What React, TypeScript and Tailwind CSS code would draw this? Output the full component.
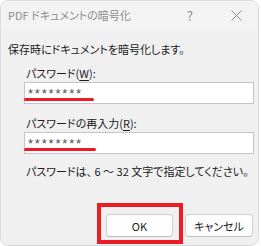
import React from 'react';

const font = "font-['Yu_Gothic_UI','Noto_Sans_CJK_JP',sans-serif] [font-feature-settings:'palt']";

function PasswordField({ label, accel, redWidth }: { label: string; accel: string; redWidth: number }) {
  return (
    <div>
      <p className="h-4 pl-[2px] leading-4">
        {label}(<span className="underline underline-offset-2">{accel}</span>):
      </p>
      <div className="relative mt-px h-[22px] w-[230px] border border-[#c4c4cc] bg-white pl-[3px] font-['Liberation_Sans',sans-serif] text-[13px] leading-[22px] tracking-[1.8px] text-[#505050]">
        ********
        <span className="absolute -left-px bottom-[2px] h-[3px] rounded-full bg-[#ed1c24]" style={{ width: redWidth }} />
      </div>
    </div>
  );
}

export default function App() {
  return (
    <div className={`h-[246px] w-[261px] bg-white text-[11px] text-[#1b1b1b] ${font}`}>
      <div className="relative flex h-[246px] w-[259px] flex-col overflow-hidden rounded-[8px] border border-[#dcdcdc] bg-[#f0f0f0]">
        <div className="flex h-[29px] items-center bg-[#f3f3f3] pl-[7px] text-[#8c8c8c]">
          <span className="flex-1">PDF ドキュメントの暗号化</span>
          <span className="mr-[38px] text-[13px]">?</span>
          <svg width="11" height="11" viewBox="0 0 11 11" className="mr-4" stroke="#8c8c8c" strokeWidth="1">
            <path d="M0.5 0.5 L10.5 10.5 M10.5 0.5 L0.5 10.5" />
          </svg>
        </div>

        <div className="flex flex-col pl-[7px]">
          <p className="mt-[11px] h-4 leading-4">保存時にドキュメントを暗号化します。</p>
          <div className="mt-2 flex flex-col gap-[11px] pl-[16px]">
            <PasswordField label="パスワード" accel="W" redWidth={70} />
            <PasswordField label="パスワードの再入力" accel="R" redWidth={72} />
          </div>
          <p className="mt-[9px] h-4 pl-[18px] leading-4">パスワードは、 6 ～ 32 文字で指定してください。</p>
        </div>

        <div className="mt-auto mb-[8px] flex justify-end gap-3 pr-[5px]">
          <button className="relative h-[23px] w-[67px] rounded-[4px] border border-[#d0d0d0] border-b-[#bdbdbd] bg-[#fdfdfd] leading-[20px]">
            OK
            <span className="pointer-events-none absolute -left-[10px] -top-[12px] h-[41px] w-[86px] border-4 border-[#ed1c24]" />
          </button>
          <button className="h-[23px] w-[68px] rounded-[4px] border border-[#d0d0d0] border-b-[#bdbdbd] bg-[#fdfdfd] leading-[20px]">
            キャンセル
          </button>
        </div>
      </div>
    </div>
  );
}
